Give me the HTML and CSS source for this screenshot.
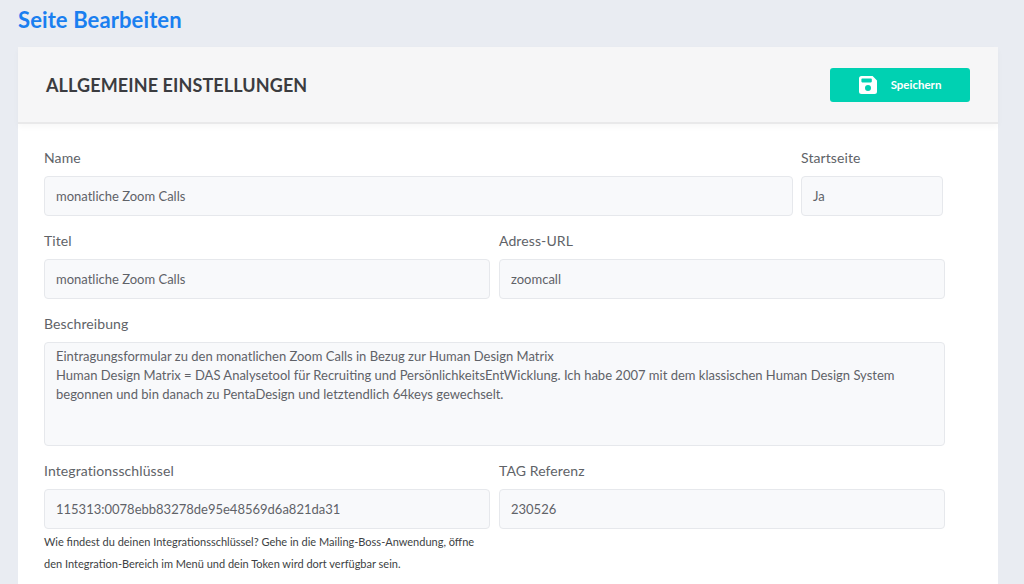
FILE: index.html
```html
<!DOCTYPE html>
<html lang="de">
<head>
<meta charset="utf-8">
<title>Seite Bearbeiten</title>
<link rel="stylesheet" href="styles.css">
</head>
<body>
<h1 class="page-title">Seite Bearbeiten</h1>
<section class="card">
  <header class="card-head">
    <h2 class="card-title">ALLGEMEINE EINSTELLUNGEN</h2>
    <button class="save" type="button">
      <svg class="save-icon" viewBox="0 0 18 18" aria-hidden="true"><path fill-rule="evenodd" d="M2.5 0H13.6L18 4.4V15.5A2.5 2.5 0 0 1 15.5 18H2.5A2.5 2.5 0 0 1 0 15.5V2.5A2.5 2.5 0 0 1 2.5 0ZM3.2 2.4A.8.8 0 0 0 2.4 3.2V5.6A.8.8 0 0 0 3.2 6.4H12A.8.8 0 0 0 12.8 5.6V3.2A.8.8 0 0 0 12 2.4ZM9 9A3 3 0 1 0 9 15A3 3 0 1 0 9 9Z" fill="#fff"/></svg>
      <span>Speichern</span>
    </button>
  </header>
  <div class="form">
    <div class="row row-home">
      <div class="field"><label class="label">Name</label><div class="input">monatliche Zoom Calls</div></div>
      <div class="field"><label class="label">Startseite</label><div class="input">Ja</div></div>
    </div>
    <div class="row row-half">
      <div class="field"><label class="label">Titel</label><div class="input">monatliche Zoom Calls</div></div>
      <div class="field"><label class="label">Adress-URL</label><div class="input">zoomcall</div></div>
    </div>
    <div class="row">
      <div class="field"><label class="label">Beschreibung</label><div class="input textarea">Eintragungsformular zu den monatlichen Zoom Calls in Bezug zur Human Design Matrix<br>Human Design Matrix = DAS Analysetool für Recruiting und PersönlichkeitsEntWicklung. Ich habe 2007 mit dem klassischen Human Design System begonnen und bin danach zu PentaDesign und letztendlich 64keys gewechselt.</div></div>
    </div>
    <div class="row row-half">
      <div class="field">
        <label class="label">Integrationsschlüssel</label>
        <div class="input">115313:0078ebb83278de95e48569d6a821da31</div>
        <p class="help">Wie findest du deinen Integrationsschlüssel? Gehe in die Mailing-Boss-Anwendung, öffne den Integration-Bereich im Menü und dein Token wird dort verfügbar sein.</p>
      </div>
      <div class="field"><label class="label">TAG Referenz</label><div class="input">230526</div></div>
    </div>
  </div>
</section>
</body>
</html>
```
FILE: styles.css
```css
* { box-sizing: border-box; }
html, body { height: 100%; overflow: hidden; }
body {
  margin: 0;
  padding: 0 26px 0 18px;
  background: #e9ecf2;
  font-family: "Lato", "Open Sans", sans-serif;
  color: #55585e;
}
.page-title {
  margin: 0;
  height: 47px;
  padding-top: 6px;
  font-size: 22px;
  line-height: 28px;
  font-weight: 700;
  color: #1a7ff0;
  letter-spacing: 0.1px;
}
.card {
  background: #fff;
  border-radius: 3px 3px 0 0;
  height: 540px;
}
.card-head {
  height: 77px;
  padding: 0 28px;
  display: flex;
  align-items: center;
  justify-content: space-between;
  background: #f6f6f7;
  border-bottom: 2px solid #e9e9ea;
  box-shadow: 0 3px 6px rgba(0, 0, 0, 0.03);
}
.card-title {
  margin: 0;
  font-size: 18px;
  font-weight: 700;
  color: #3b3c40;
  padding-left: 0;
  letter-spacing: 0.1px;
}
.save {
  width: 140px;
  height: 34px;
  margin-top: 0;
  border: 0;
  border-radius: 3px;
  background: #00d1b2;
  color: #fff;
  font: 700 11.5px "Lato", sans-serif;
  display: flex;
  align-items: center;
  justify-content: center;
  gap: 14px;
  padding: 0;
}
.save-icon { width: 18px; height: 18px; }
.form {
  padding: 25px 53px 0 26px;
  display: flex;
  flex-direction: column;
  gap: 16px;
}
.row { display: grid; column-gap: 9px; }
.row-home { grid-template-columns: 749px 142px; column-gap: 8px; }
.row-half { grid-template-columns: 446px 446px; }
.label {
  display: block;
  height: 18px;
  margin-bottom: 9px;
  font-size: 14px;
  line-height: 18px;
  color: #606368;
  letter-spacing: 0.1px;
}
.input {
  height: 40px;
  padding: 0 11px;
  background: #f8f9fb;
  border: 1px solid #e6e8ec;
  border-radius: 4px;
  font-size: 13px;
  line-height: 38px;
  color: #5f6268;
}
.textarea {
  height: 104px;
  padding-top: 4px;
  line-height: 19px;
}
.help {
  margin: 0;
  padding-top: 2px;
  font-size: 11px;
  line-height: 22px;
  color: #3d3f44;
}
```
